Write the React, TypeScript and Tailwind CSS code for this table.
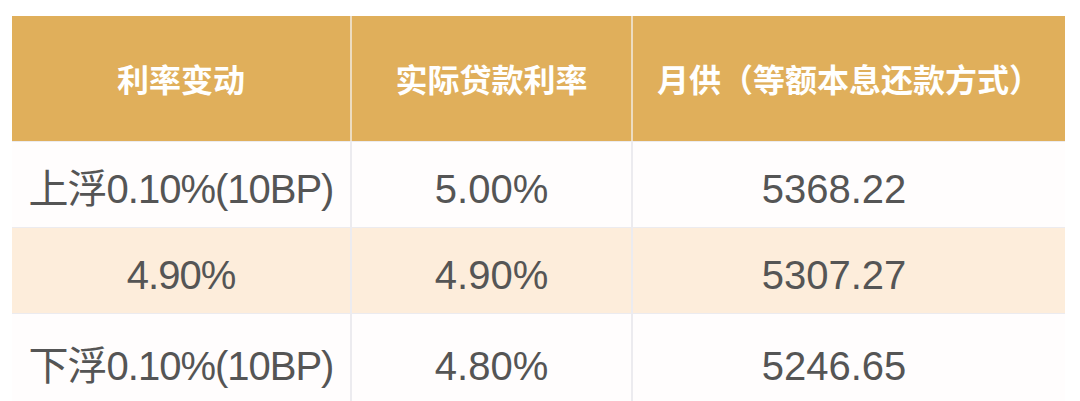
const rows = [
  {change: "上浮0.10%(10BP)", rate: "5.00%", pay: "5368.22", bg: "bg-[#fffdfd]"},
  {change: "4.90%", rate: "4.90%", pay: "5307.27", bg: "bg-[#fdeddb]"},
  {change: "下浮0.10%(10BP)", rate: "4.80%", pay: "5246.65", bg: "bg-[#fffdfd]"},
];

// per-column tweaks so the numbers sit where the original screenshot has them
const cellCls = ["tracking-[-1px]", "border-l-2", "border-l-2 pr-[30px]"];

export default function App() {
  return (
    <div className="h-[401px] w-[1080px] overflow-hidden bg-white pl-3 pt-4 font-['Liberation_Sans','Noto_Sans_CJK_SC',sans-serif]">
      <div className="grid w-[1053px] grid-cols-[338px_281px_434px]">
        {["利率变动", "实际贷款利率", "月供（等额本息还款方式）"].map((h, i) => (
          <div key={h} className={`flex h-[125px] items-center justify-center bg-[#e0af5b] pt-1 text-[32px] font-bold text-white ${i > 0 ? "border-l-2 border-[#eddcc0]" : ""}`}>
            {h}
          </div>
        ))}
        {rows.map((r, ri) => (
          [r.change, r.rate, r.pay].map((c, i) => (
            <div key={`${ri}-${i}`} className={`flex items-center justify-center border-t border-[#ecebef] pt-2 text-[40px] text-[#555555] ${ri === 2 ? "h-[96px]" : "h-[86px]"} ${r.bg} ${cellCls[i]}`}>
              {c}
            </div>
          ))
        ))}
      </div>
    </div>
  );
}
